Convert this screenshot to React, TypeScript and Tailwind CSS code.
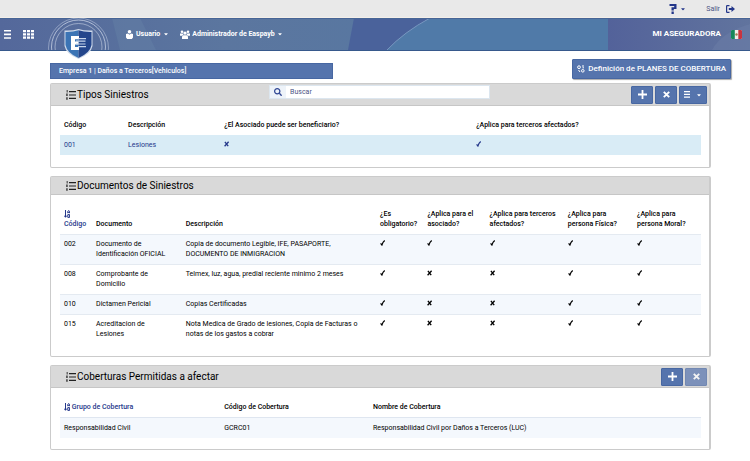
import React from 'react';
import { FaCaretDown, FaSearch } from 'react-icons/fa';

const BLUE = 'bg-[#5574ad] border border-[#4767a2]';

const ListIcon: React.FC = () => (
    <svg className="w-[10px] h-[10px] shrink-0" viewBox="0 0 10 10" fill="#222">
        <path d="M3 1h7v1.2H3zM3 4.4h7v1.2H3zM3 7.8h7V9H3zM.7 0h.9v2.6H.7zM.3 3.6h1.3v2.4H.3zM.3 7.2h1.3v2.6H.3z" />
    </svg>
);

const SortIcon: React.FC = () => (
    <svg className="inline-block w-[6px] h-[8px] shrink-0" viewBox="0 0 6 8" fill="none" stroke="#24378a" strokeWidth="1">
        <path d="M1.5 0v7M.2 5.6l1.3 1.7 1.3-1.7" />
        <path d="M3.8 3.2V1.3l.9-.8.9.8v1.900M3.8 2.3h1.8M3.8 4.6h1.8v2.8H3.8z" />
    </svg>
);

const PlusIcon: React.FC = () => (
    <svg className="w-[9px] h-[9px]" viewBox="0 0 9 9" fill="#fff">
        <path d="M3.6 0h1.8v3.6H9v1.8H5.4V9H3.6V5.4H0V3.6h3.6z" />
    </svg>
);

const CloseIcon: React.FC = () => (
    <svg className="w-[7px] h-[7px]" viewBox="0 0 7 7" stroke="#fff" strokeWidth="1.9">
        <path d="M.8.8l5.4 5.4M6.2.8L.8 6.2" />
    </svg>
);

const BarsIcon: React.FC<{ className: string }> = ({ className }) => (
    <svg className={className} viewBox="0 0 8 9" preserveAspectRatio="none" fill="#fff">
        <path d="M0 0h8v1.6H0zM0 3.6h8v1.6H0zM0 7.2h8v1.6H0z" />
    </svg>
);

const Logo: React.FC = () => (
    <svg className="absolute left-[46px] top-0 w-[66px] h-[42px]" viewBox="0 0 66 42">
        <defs>
            <clipPath id="bar">
                <rect width="66" height="32" />
            </clipPath>
        </defs>
        <g clipPath="url(#bar)" fill="none" stroke="#c7d1e4">
            <circle cx="32.5" cy="30" r="30" strokeWidth=".5" />
            <circle cx="32.5" cy="29" r="27" strokeWidth=".8" />
            <circle cx="32.5" cy="29" r="23.5" strokeWidth=".6" />
        </g>
        <path d="M32.5 11Q26 13 18.5 12.5V28Q20 36 32.5 41Q45 36 46.5 28V12.5Q39 13 32.5 11z" fill="#cfdaeb" />
        <path d="M32.5 12.2Q27 14.2 19.5 14V27Q21 35 32.5 40z" fill="#3b74b5" />
        <path d="M32.5 12.2Q38 14.2 45.5 14V27Q44 35 32.5 40z" fill="#24468c" />
        <path d="M25 18h8v3.2H29v2.2h3.5v3H29v2.6h4V32h-8z" fill="#fff" />
        <path d="M32.5 20.6h7.5M30 23.2h9.5M30 26h9.5M32 28.7h8" stroke="#c8d6ea" strokeWidth="1.2" />
    </svg>
);

const Flag: React.FC = () => (
    <svg className="w-[11px] h-[9px]" viewBox="0 0 11 9">
        <rect width="11" height="9" rx="1" fill="#f1efea" />
        <path d="M1 0h2.8v9H1Q0 9 0 8V1Q0 0 1 0z" fill="#16875a" />
        <path d="M7.3 0H10Q11 0 11 1v7q0 1-1 1H7.3z" fill="#c8343f" />
        <circle cx="5.5" cy="4.5" r="1.2" fill="#9c8050" />
    </svg>
);

interface ToolButtonProps {
    label: string;
    disabled?: boolean;
    children: React.ReactNode;
    className?: string;
}

const ToolButton: React.FC<ToolButtonProps> = ({ label, disabled, children, className = 'w-[22px]' }) => (
    <button
        type="button"
        aria-label={label}
        disabled={disabled}
        className={`${className} ${BLUE} h-[18px] rounded-[1px] flex items-center justify-center gap-1.5 text-white disabled:opacity-70`}
    >
        {children}
    </button>
);

interface PanelProps {
    title: string;
    headClass: string;
    bodyClass: string;
    search?: React.ReactNode;
    tools?: React.ReactNode;
    children: React.ReactNode;
}

const Panel: React.FC<PanelProps> = ({ title, headClass, bodyClass, search, tools, children }) => (
    <section className="border border-[#cbcbcb] border-r-2 rounded-[2px] bg-white">
        <header className={`${headClass} bg-[#d9d9d9] border-b border-[#c6c6c6] flex items-center pl-[15px] pr-[2px]`}>
            <h2 className="flex items-center gap-px w-[32%] text-[10px] leading-3 font-normal text-black">
                <ListIcon />
                {title}
            </h2>
            {search}
            <div className="flex flex-1 justify-end gap-[2px]">{tools}</div>
        </header>
        <div className={`${bodyClass} pl-[9px] pr-[8px]`}>{children}</div>
    </section>
);

const Mark: React.FC<{ on: boolean }> = ({ on }) => (
    <svg role="img" aria-label={on ? 'Sí' : 'No'} className="block mt-px w-[6px] h-[6px]" viewBox="0 0 6 6" fill="none" stroke="currentColor">
        {on ? (
            <path d="M.6 3.3L1.9 5Q2.700 2.2 4.700.5" strokeWidth="1.2" />
        ) : (
            <path d="M.9.8l3.300 4.400M4.600.8L.6 5.200" strokeWidth="1.3" />
        )}
    </svg>
);

const documents = [
    { code: '002', name: 'Documento de Identificación OFICIAL', text: 'Copia de documento Legible, IFE, PASAPORTE, DOCUMENTO DE INMIGRACION', marks: [true, true, true, true, true] },
    { code: '008', name: 'Comprobante de Domicilio', text: 'Telmex, luz, agua, predial reciente minimo 2 meses', marks: [true, false, false, true, true] },
    { code: '010', name: 'Dictamen Pericial', text: 'Copias Certificadas', marks: [true, false, false, true, true] },
    { code: '015', name: 'Acreditacion de Lesiones', text: 'Nota Medica de Grado de lesiones, Copia de Facturas o notas de los gastos a cobrar', marks: [true, false, false, true, true] },
];

const questions = [
    ['¿Es', 'obligatorio?'],
    ['¿Aplica para el', 'asociado?'],
    ['¿Aplica para terceros', 'afectados?'],
    ['¿Aplica para', 'persona Física?'],
    ['¿Aplica para', 'persona Moral?'],
];

const tableClass = 'w-full table-fixed text-left text-[7px] leading-[10px] text-black';
const cellClass = 'pl-1 py-[5px] align-top';
const headCell = 'pl-1 py-[5px] align-bottom font-medium';

const App: React.FC = () => {
    return (
        <div className="font-[Roboto,sans-serif] text-[7px] leading-[10px] bg-white min-h-screen">
            <div className="h-[18px] bg-[#e9e9e9] border-b border-[#f4efe9] flex items-center justify-end pr-[15px] text-[#24378a]">
                <button type="button" aria-label="Ayuda" className="flex items-center gap-[3px] mr-[20px]">
                    <svg className="w-[8px] h-[10px]" viewBox="0 0 8 10" fill="#24378a">
                        <path d="M.5 0h7v5H4.8v1.6H2.5V3.3h2.7V2.1H.5zM2.5 7.6h2.3V10H2.5z" />
                    </svg>
                    <FaCaretDown className="w-[6px] h-[6px]" />
                </button>
                <a href="#salir" className="flex items-center gap-[6px] text-[#4a5585]">
                    Salir
                    <svg className="w-[9px] h-[8px]" viewBox="0 0 9 8">
                        <path d="M3.5.6H1.2Q.6.6.6 1.2v5.6q0 .6.6.6h2.3" fill="none" stroke="#24378a" strokeWidth="1.2" />
                        <path d="M2.8 3h2.7V1L9 4 5.5 7V5H2.8z" fill="#24378a" />
                    </svg>
                </a>
            </div>

            <div className="relative h-[33px] border-b border-[#37598c] text-white">
                <svg className="absolute inset-0 w-full h-full" viewBox="0 0 750 32" preserveAspectRatio="none">
                    <defs>
                        <linearGradient id="left">
                            <stop offset="0" stopColor="#54689b" />
                            <stop offset=".3" stopColor="#5b769f" />
                            <stop offset="1" stopColor="#527aa5" />
                        </linearGradient>
                        <linearGradient id="right">
                            <stop offset="0" stopColor="#53629a" />
                            <stop offset="1" stopColor="#61749e" />
                        </linearGradient>
                    </defs>
                    <rect width="750" height="32" fill="url(#left)" />
                    <path d="M112 0h28l16 32h-36z" fill="#6380a6" opacity=".5" />
                    <path d="M354 0h76Q404 14 387 32h-39z" fill="#4a629b" />
                    <path d="M430 0h178v32H387Q404 14 430 0z" fill="#507aa8" />
                    <path d="M430 0Q404 14 387 32" fill="none" stroke="#82a0c6" strokeWidth=".8" />
                    <rect x="608" width="142" height="32" fill="url(#right)" />
                    <path d="M712 32Q722 14 750 6V32z" fill="#6c7ea8" opacity=".5" />
                    <rect width="750" height="1" fill="#476596" />
                </svg>
                <Logo />
                <nav className="relative h-full flex items-center pl-1 pr-2 font-bold">
                    <button type="button" aria-label="Menú">
                        <BarsIcon className="w-[7px] h-[9px]" />
                    </button>
                    <button type="button" aria-label="Aplicaciones" className="ml-3">
                        <svg className="w-[11px] h-[9px]" viewBox="0 0 11 9" fill="#fff">
                            <path d="M0 0h3v2.2H0zM4 0h3v2.2H4zM8 0h3v2.2H8zM0 3.3h3v2.2H0zM4 3.3h3v2.2H4zM8 3.3h3v2.2H8zM0 6.6h3v2.2H0zM4 6.6h3v2.2H4zM8 6.6h3v2.2H8z" />
                        </svg>
                    </button>
                    <button type="button" className="ml-[92px] flex items-center gap-[3px]">
                        <svg className="w-[7px] h-[9px]" viewBox="0 0 7 9" fill="#fff">
                            <circle cx="3.5" cy="1.8" r="1.8" />
                            <path d="M0 4l2-.5 1.5 1.3L5 3.5 7 4v3.5L5.8 9H1.2L0 7.5z" />
                        </svg>
                        Usuario
                        <FaCaretDown className="w-[6px] h-[6px]" />
                    </button>
                    <button type="button" className="ml-[11px] flex items-center gap-[2px]">
                        <svg className="w-[10px] h-[9px]" viewBox="0 0 10 9" fill="#fff">
                            <circle cx="2" cy="1.7" r="1.3" />
                            <circle cx="8" cy="1.7" r="1.3" />
                            <circle cx="5" cy="3.1" r="1.7" />
                            <path d="M0 3.5h2.7L3.5 5 2 5.8H0zM10 3.5H7.3L6.5 5 8 5.8h2zM2 9V6.5L3.5 5.2h3L8 6.5V9z" />
                        </svg>
                        Administrador de Easpayb
                        <FaCaretDown className="w-[6px] h-[6px]" />
                    </button>
                    <span className="ml-auto mr-[10px] text-[8px]">MI ASEGURADORA</span>
                    <Flag />
                </nav>
            </div>

            <main className="pl-[50px] pr-[39px] pt-2">
                <div className="flex justify-between items-end mr-[-20px]">
                    <div className={`${BLUE} w-[41.5%] h-[16px] flex items-center pl-2 text-white font-medium`}>
                        Empresa 1 | Daños a Terceros[Vehiculos]
                    </div>
                    <button
                        type="button"
                        className={`${BLUE} h-[20px] flex items-center gap-[3px] px-1 rounded-[1px] text-white text-[8px] font-medium shadow-[1px_1px_1px_#aaa]`}
                    >
                        <svg className="w-[8px] h-[8px]" viewBox="0 0 8 8" fill="none" stroke="#fff">
                            <circle cx="2" cy="2.2" r="1.4" />
                            <circle cx="5.8" cy="5.8" r="1.3" />
                            <path d="M5 1h2M5.5 2.8H7M1.5 5L3 7" />
                        </svg>
                        Definición de PLANES DE COBERTURA
                    </button>
                </div>

                <div className="mt-1 flex flex-col gap-2">
                    <Panel
                        title="Tipos Siniestros"
                        headClass="h-[22px]"
                        bodyClass="pt-[9px] pb-3"
                        search={
                            <label className="w-[34.5%] h-[14px] self-start mt-px -ml-[2px] flex bg-white border border-[#dce6ef] text-[#24378a]">
                                <span className="w-[16px] shrink-0 bg-[#eef3f9] flex items-center justify-center">
                                    <FaSearch className="w-[8px] h-[8px] text-[#2f4593]" />
                                </span>
                                <input type="text" aria-label="Buscar" placeholder="Buscar" className="flex-1 min-w-0 pl-[4px] outline-none placeholder:text-[#4a5585]" />
                            </label>
                        }
                        tools={
                            <>
                                <ToolButton label="Agregar"><PlusIcon /></ToolButton>
                                <ToolButton label="Eliminar"><CloseIcon /></ToolButton>
                                <ToolButton label="Opciones" className="w-[28px]">
                                    <BarsIcon className="w-[6px] h-[7px]" />
                                    <FaCaretDown className="w-[6px] h-[6px]" />
                                </ToolButton>
                            </>
                        }
                    >
                        <table className={tableClass}>
                            <thead>
                                <tr>
                                    <th className={`${headCell} w-[10%]`}>Código</th>
                                    <th className={`${headCell} w-[15%]`}>Descripción</th>
                                    <th className={`${headCell} w-[39.3%]`}>¿El Asociado puede ser beneficiario?</th>
                                    <th className={headCell}>¿Aplica para terceros afectados?</th>
                                </tr>
                            </thead>
                            <tbody>
                                <tr className="bg-[#d9ecf6] text-[#24378a]">
                                    <td className={cellClass}>001</td>
                                    <td className={cellClass}>Lesiones</td>
                                    <td className={cellClass}><Mark on={false} /></td>
                                    <td className={cellClass}><Mark on /></td>
                                </tr>
                            </tbody>
                        </table>
                    </Panel>

                    <Panel title="Documentos de Siniestros" headClass="h-[18px]" bodyClass="pt-[9px] pb-3">
                        <table className={tableClass}>
                            <colgroup>
                                <col className="w-[5%]" />
                                <col className="w-[14%]" />
                                <col className="w-[30.3%]" />
                                <col className="w-[7.4%]" />
                                <col className="w-[9.7%]" />
                                <col className="w-[12.2%]" />
                                <col className="w-[10.8%]" />
                                <col className="w-[10.6%]" />
                            </colgroup>
                            <thead>
                                <tr>
                                    <th className={`${headCell} text-[#24378a]`}>
                                        <SortIcon />
                                        <br />
                                        Código
                                    </th>
                                    <th className={headCell}>Documento</th>
                                    <th className={headCell}>Descripción</th>
                                    {questions.map(([first, second], i) => (
                                        <th key={i} className={headCell}>{first}<br />{second}</th>
                                    ))}
                                </tr>
                            </thead>
                            <tbody>
                                {documents.map((doc) => (
                                    <tr key={doc.code} className="shadow-[inset_0_1px_0_#e4eaf1] odd:bg-[#f4f8fd]">
                                        <td className={cellClass}>{doc.code}</td>
                                        <td className={`${cellClass} pr-3`}>{doc.name}</td>
                                        <td className={`${cellClass} pr-3`}>{doc.text}</td>
                                        {doc.marks.map((on, i) => (
                                            <td key={i} className={cellClass}><Mark on={on} /></td>
                                        ))}
                                    </tr>
                                ))}
                            </tbody>
                        </table>
                    </Panel>

                    <Panel
                        title="Coberturas Permitidas a afectar"
                        headClass="h-[22px]"
                        bodyClass="pt-[9px] pb-[11px]"
                        tools={
                            <>
                                <ToolButton label="Agregar"><PlusIcon /></ToolButton>
                                <ToolButton label="Eliminar" disabled><CloseIcon /></ToolButton>
                            </>
                        }
                    >
                        <table className={tableClass}>
                            <thead>
                                <tr>
                                    <th className={`${headCell} w-1/4 text-[#24378a]`}><SortIcon /> Grupo de Cobertura</th>
                                    <th className={`${headCell} w-[23.2%]`}>Código de Cobertura</th>
                                    <th className={headCell}>Nombre de Cobertura</th>
                                </tr>
                            </thead>
                            <tbody>
                                <tr className="border-t border-[#dfe6f0] bg-[#f4f8fd]">
                                    <td className={cellClass}>Responsabilidad Civil</td>
                                    <td className={cellClass}>GCRC01</td>
                                    <td className={cellClass}>Responsabilidad Civil por Daños a Terceros (LUC)</td>
                                </tr>
                            </tbody>
                        </table>
                    </Panel>
                </div>
            </main>
        </div>
    );
};

export default App;
